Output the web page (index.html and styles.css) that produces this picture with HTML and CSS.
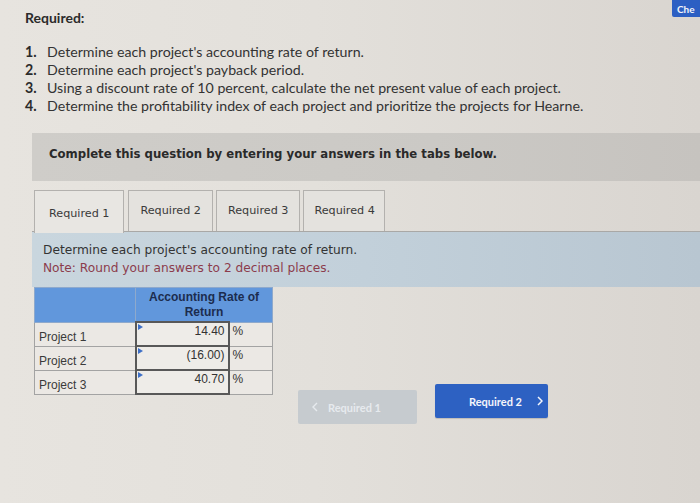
FILE: index.html
```html
<!DOCTYPE html>
<html lang="en">
<head>
<meta charset="utf-8">
<title>Required</title>
<link rel="stylesheet" href="styles.css">
</head>
<body>
<div class="page">
  <button class="check-btn">Che</button>
  <h2 class="req-title">Required:</h2>
  <ol class="req-list">
    <li><span class="num">1.</span>Determine each project's accounting rate of return.</li>
    <li><span class="num">2.</span>Determine each project's payback period.</li>
    <li><span class="num">3.</span>Using a discount rate of 10 percent, calculate the net present value of each project.</li>
    <li><span class="num">4.</span>Determine the profitability index of each project and prioritize the projects for Hearne.</li>
  </ol>

  <div class="band">Complete this question by entering your answers in the tabs below.</div>

  <div class="tabs">
    <div class="tab active">Required 1</div>
    <div class="tab">Required 2</div>
    <div class="tab">Required 3</div>
    <div class="tab">Required 4</div>
  </div>

  <div class="panel">
    <p class="panel-q">Determine each project's accounting rate of return.</p>
    <p class="panel-note">Note: Round your answers to 2 decimal places.</p>
  </div>

  <div class="work">
    <table class="arr">
      <thead>
        <tr>
          <th class="h-label"></th>
          <th class="h-col" colspan="2">Accounting Rate of Return</th>
        </tr>
      </thead>
      <tbody>
        <tr>
          <td class="label">Project 1</td>
          <td class="input"><span class="tri"></span>14.40</td>
          <td class="pct">%</td>
        </tr>
        <tr>
          <td class="label">Project 2</td>
          <td class="input"><span class="tri"></span>(16.00)</td>
          <td class="pct">%</td>
        </tr>
        <tr>
          <td class="label">Project 3</td>
          <td class="input"><span class="tri"></span>40.70</td>
          <td class="pct">%</td>
        </tr>
      </tbody>
    </table>

    <div class="nav">
      <button class="nav-btn prev">
        <svg class="chev" width="6" height="10" viewBox="0 0 6 10"><path d="M5 1 L1 5 L5 9" fill="none" stroke="currentColor" stroke-width="1.4"/></svg>
        <span>Required 1</span>
      </button>
      <button class="nav-btn next">
        <span>Required 2</span>
        <svg class="chev" width="6" height="10" viewBox="0 0 6 10"><path d="M1 1 L5 5 L1 9" fill="none" stroke="currentColor" stroke-width="1.5"/></svg>
      </button>
    </div>
  </div>
</div>
</body>
</html>
```

FILE: styles.css
```css
html, body {
  margin: 0;
  padding: 0;
}

body {
  width: 700px;
  height: 503px;
  overflow: hidden;
  background: linear-gradient(90deg, #e7e4df 0%, #e3e0db 45%, #d9d5d0 100%);
  font-family: "Lato", "Open Sans", sans-serif;
  color: #2f2f2f;
}

.page {
  position: relative;
  padding: 9px 0 0 0;
}

.check-btn {
  position: absolute;
  top: -3px;
  left: 672px;
  width: 28px;
  height: 20px;
  border: none;
  border-radius: 2px 0 0 2px;
  background: #2c5fc3;
  color: #f2f4fa;
  font-family: "Lato", sans-serif;
  font-weight: 700;
  font-size: 10px;
  text-align: left;
  padding: 3px 0 0 5px;
}

.req-title {
  margin: 0 0 0 25px;
  font-size: 14px;
  line-height: 18px;
  font-weight: 700;
  color: #2b2b2b;
}

.req-list {
  list-style: none;
  margin: 16px 0 0 25px;
  padding: 0;
  font-size: 14.2px;
  line-height: 18px;
  color: #333;
}

.req-list li {
  display: flex;
}

.req-list .num {
  width: 22px;
  font-weight: 700;
  color: #2b2b2b;
}

.band {
  margin: 18px 0 0 32px;
  height: 48px;
  box-sizing: border-box;
  padding: 14px 0 0 17px;
  background: linear-gradient(90deg, #cfcdc9 0%, #cbc9c5 60%, #c6c3bf 100%);
  font-family: "DejaVu Sans", Verdana, sans-serif;
  font-weight: 700;
  font-size: 11.7px;
  color: #2a2a2a;
}

.tabs {
  display: flex;
  gap: 3px;
  margin: 9px 0 0 32px;
  padding-left: 2px;
  border-bottom: 1px solid #a9a8a6;
  height: 41px;
}

.tab {
  box-sizing: border-box;
  height: 41px;
  padding: 13px 11px 0 11px;
  border: 1px solid #b3b1ae;
  border-bottom: none;
  background: #e4e2de;
  font-family: "DejaVu Sans", Verdana, sans-serif;
  font-size: 11.2px;
  color: #3a3a3a;
}

.tab:last-child {
  padding: 13px 9px 0 10px;
}

.tab.active {
  height: 43px;
  padding: 16px 14px 0 14px;
  background: #e8e6e2;
  margin-bottom: -2px;
  margin-right: 1px;
  position: relative;
}

.panel {
  margin: 0 0 0 32px;
  height: 55px;
  box-sizing: border-box;
  padding: 9px 0 0 11px;
  background: linear-gradient(90deg, #c9d6de 0%, #c2d0da 50%, #b8c6d1 100%);
  font-family: "DejaVu Sans", Verdana, sans-serif;
  font-size: 12.2px;
  line-height: 18px;
}

.panel p {
  margin: 0;
}

.panel-q {
  color: #333;
}

.panel-note {
  color: #8c3c4c;
}

.work {
  display: flex;
  align-items: flex-start;
  margin: 0 0 0 34px;
}

.arr {
  border-collapse: collapse;
  font-family: "Liberation Sans", Arial, sans-serif;
  font-size: 12px;
  line-height: 14px;
  color: #333;
  border: 1px solid #9c9c9c;
}

.arr th {
  background: #6197dc;
  height: 33px;
  padding: 0;
  border: 1px solid #8ea9cc;
}

.h-label {
  width: 100px;
}

.h-col {
  color: #1c2c4e;
  font-weight: 700;
  line-height: 15px;
  text-align: center;
}

.arr tbody tr {
  height: 24px;
}

.arr td {
  padding: 0;
  border: 1px solid #a3a3a3;
  background: #ebe8e4;
}

.arr .label {
  width: 100px;
  padding: 7px 0 0 4px;
  box-sizing: border-box;
  vertical-align: top;
  color: #3a3a3a;
}

.arr .input {
  position: relative;
  width: 88px;
  border: 2px solid #585858;
  vertical-align: top;
  text-align: right;
  padding: 1px 3px 0 0;
  background: #eeece8;
}

.tri {
  position: absolute;
  top: 1px;
  left: 1px;
  width: 0;
  height: 0;
  border-top: 3px solid transparent;
  border-bottom: 3px solid transparent;
  border-left: 5px solid #3d6fc7;
}

.arr .pct {
  width: 44px;
  vertical-align: top;
  padding: 1px 0 0 3px;
  box-sizing: border-box;
}

.nav {
  display: flex;
  align-items: flex-start;
  gap: 18px;
  margin: 97px 0 0 25px;
}

.nav-btn {
  height: 34px;
  border: none;
  border-radius: 2px;
  font-family: "Lato", sans-serif;
  font-weight: 700;
  font-size: 11px;
  display: flex;
  align-items: center;
  justify-content: flex-start;
}

.nav-btn.prev {
  margin-top: 6px;
  width: 119px;
  padding: 0 0 0 14px;
  background: #c6cbcf;
  color: #e6eaee;
  gap: 10px;
}

.nav-btn.next {
  width: 113px;
  padding: 0 0 0 34px;
  background: #2d61c2;
  color: #f4f6fb;
  gap: 15px;
  box-shadow: 0 1px 1px rgba(0, 0, 0, 0.15);
}

.chev {
  display: block;
}
```
